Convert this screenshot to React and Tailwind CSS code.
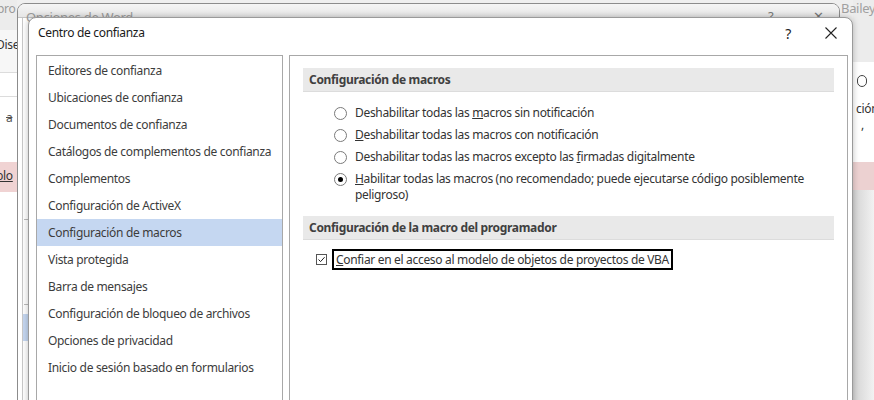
import React from 'react';

const NAV = [
  'Editores de confianza',
  'Ubicaciones de confianza',
  'Documentos de confianza',
  'Catálogos de complementos de confianza',
  'Complementos',
  'Configuración de ActiveX',
  'Configuración de macros',
  'Vista protegida',
  'Barra de mensajes',
  'Configuración de bloqueo de archivos',
  'Opciones de privacidad',
  'Inicio de sesión basado en formularios',
];

function Radio({ checked }) {
  return (
    <span className="w-[13px] h-[13px] rounded-full border border-[#7a7a7a] bg-white flex items-center justify-center shrink-0">
      {checked && <span className="w-[5px] h-[5px] rounded-full bg-black" />}
    </span>
  );
}

function Option({ checked, children }) {
  return (
    <div className="flex items-start gap-[8px] leading-[16px]">
      <span className="mt-[2px]"><Radio checked={checked} /></span>
      <span>{children}</span>
    </div>
  );
}

export default function App() {
  return (
    <div className="relative w-[874px] h-[400px] overflow-hidden bg-[#efefef] text-[12px] text-[#333] tracking-[-0.32px]" style={{ fontFamily: '"Noto Sans", sans-serif' }}>
      {/* Word behind - left strip */}
      <div className="absolute left-0 top-0 w-[17px] h-[400px] bg-white overflow-hidden">
        <div className="h-[30px] bg-[#ececec] text-[#9a9a9a] -ml-[3px] whitespace-nowrap">pro</div>
        <div className="h-[43px] bg-[#f7f7f7] text-[#333] -ml-[4px] pt-[6px] border-b border-[#dcdcdc] whitespace-nowrap">Dise</div>
        <div className="h-[24px] border-b border-[#dcdcdc]" />
        <div className="h-[65px] text-[#555] pl-[6px] pt-[12px] line-through">a</div>
        <div className="h-[30px] bg-[#f0d3d3] -ml-[4px] leading-[28px] underline text-[#333] whitespace-nowrap">blo</div>
      </div>

      {/* Word behind - right strip */}
      <div className="absolute left-[853px] top-0 w-[21px] h-[400px] bg-[#ececec] overflow-hidden">
        <div className="h-[62px]" />
        <div className="h-[100px] bg-white relative">
          <span className="absolute left-[4px] top-[13px] w-[10px] h-[12px] rounded-full border border-[#444]" />
          <span className="absolute left-[3px] top-[38px] text-[#333]">ción</span>
          <span className="absolute left-[8px] top-[54px] text-[#333]">,</span>
        </div>
        <div className="h-[28px] bg-[#ecd1d1]" />
        <div className="h-[210px] bg-gradient-to-r from-[#d3d3d3] to-[#f2f2f2]" />
      </div>
      <div className="absolute left-[841px] top-[0px] text-[#a0a0a0] text-[13px] leading-[16px]">Bailey</div>

      {/* Opciones de Word window */}
      <div className="absolute left-[17px] top-[3px] w-[823px] h-[420px] rounded-t-[8px] border border-[#8c8c8c] bg-white overflow-hidden">
        <div className="h-[14px] bg-gradient-to-b from-[#f5f5f5] to-[#e6e6e6] border-b border-[#c4c4c4] relative">
          <span className="absolute left-[8px] top-[4px] text-[#9a9a9a] text-[13px]">Opciones de Word</span>
          <span className="absolute left-[750px] top-[3px] text-[#777] text-[13px]">?</span>
          <span className="absolute left-[795px] top-[3px] text-[#777] text-[13px]">✕</span>
        </div>
        <div className="absolute left-[4px] top-[14px] w-[1px] h-[420px] bg-[#c8c8c8]" />
        <div className="absolute left-[6px] top-[215px] w-[4px] h-[1px] bg-[#bbb]" />
        <div className="absolute left-[6px] top-[300px] w-[4px] h-[1px] bg-[#bbb]" />
        <div className="absolute left-[5px] top-[310px] w-[8px] h-[27px] bg-[#c5d7f1]" />
      </div>

      {/* Centro de confianza dialog */}
      <div className="absolute left-[28px] top-[17px] w-[825px] h-[400px] rounded-t-[8px] border border-[#9a9a9a] bg-white shadow-[0_0_6px_rgba(0,0,0,0.25)] flex flex-col">
        <div className="h-[37px] flex items-center pl-[9px] pr-[14px] pb-[7px] shrink-0">
          <span className="text-[#1a1a1a] text-[12px]">Centro de confianza</span>
          <span className="ml-auto text-[#222] text-[14px] mr-[34px]">?</span>
          <svg width="12" height="12" viewBox="0 0 12 12" className="mr-[1px]">
            <path d="M0.5 0.5 L11.5 11.5 M11.5 0.5 L0.5 11.5" stroke="#222" strokeWidth="1.1" />
          </svg>
        </div>
        <div className="flex flex-1 pl-[7px] gap-[6px] pr-[4px]">
          <div className="w-[247px] border border-[#a8a8a8] flex flex-col">
            <div className="h-[1px]" />
            {NAV.map((n) => (
              <div
                key={n}
                className={`h-[27px] leading-[27px] pl-[11px] text-[#3c3c3c] whitespace-nowrap ${n === 'Configuración de macros' ? 'bg-[#c5d7f1]' : ''}`}
              >
                {n}
              </div>
            ))}
          </div>
          <div className="flex-1 border border-[#a8a8a8] pt-[12px] pl-[13px] pr-[13px]">
            <div className="h-[24px] bg-[#e9e9e9] border-b border-[#dcdcdc] pl-[6px] leading-[23px] font-bold text-[#404040]">
              Configuración de macros
            </div>
            <div className="pl-[31px] pt-[13px] flex flex-col gap-[6px] text-[#333]">
              <Option>Deshabilitar todas las <u>m</u>acros sin notificación</Option>
              <Option><u>D</u>eshabilitar todas las macros con notificación</Option>
              <Option>Deshabilitar todas las macros excepto las <u>f</u>irmadas digitalmente</Option>
              <Option checked>
                <u>H</u>abilitar todas las macros (no recomendado; puede ejecutarse código posiblemente<br />peligroso)
              </Option>
            </div>
            <div className="mt-[13px] h-[24px] bg-[#e9e9e9] border-b border-[#dcdcdc] pl-[6px] leading-[23px] font-bold text-[#404040]">
              Configuración de la macro del programador
            </div>
            <div className="flex items-center pl-[13px] pt-[9px]">
              <span className="w-[11px] h-[11px] border border-[#555] flex items-center justify-center bg-white">
                <svg width="9" height="9" viewBox="0 0 9 9">
                  <path d="M1.5 4.5 L3.6 6.6 L7.6 2.2" stroke="#222" strokeWidth="1" fill="none" />
                </svg>
              </span>
              <span className="ml-[5px] border-2 border-black px-[2px] h-[21px] leading-[17px] text-[#333]">
                <u>C</u>onfiar en el acceso al modelo de objetos de proyectos de VBA
              </span>
            </div>
          </div>
        </div>
      </div>
    </div>
  );
}
